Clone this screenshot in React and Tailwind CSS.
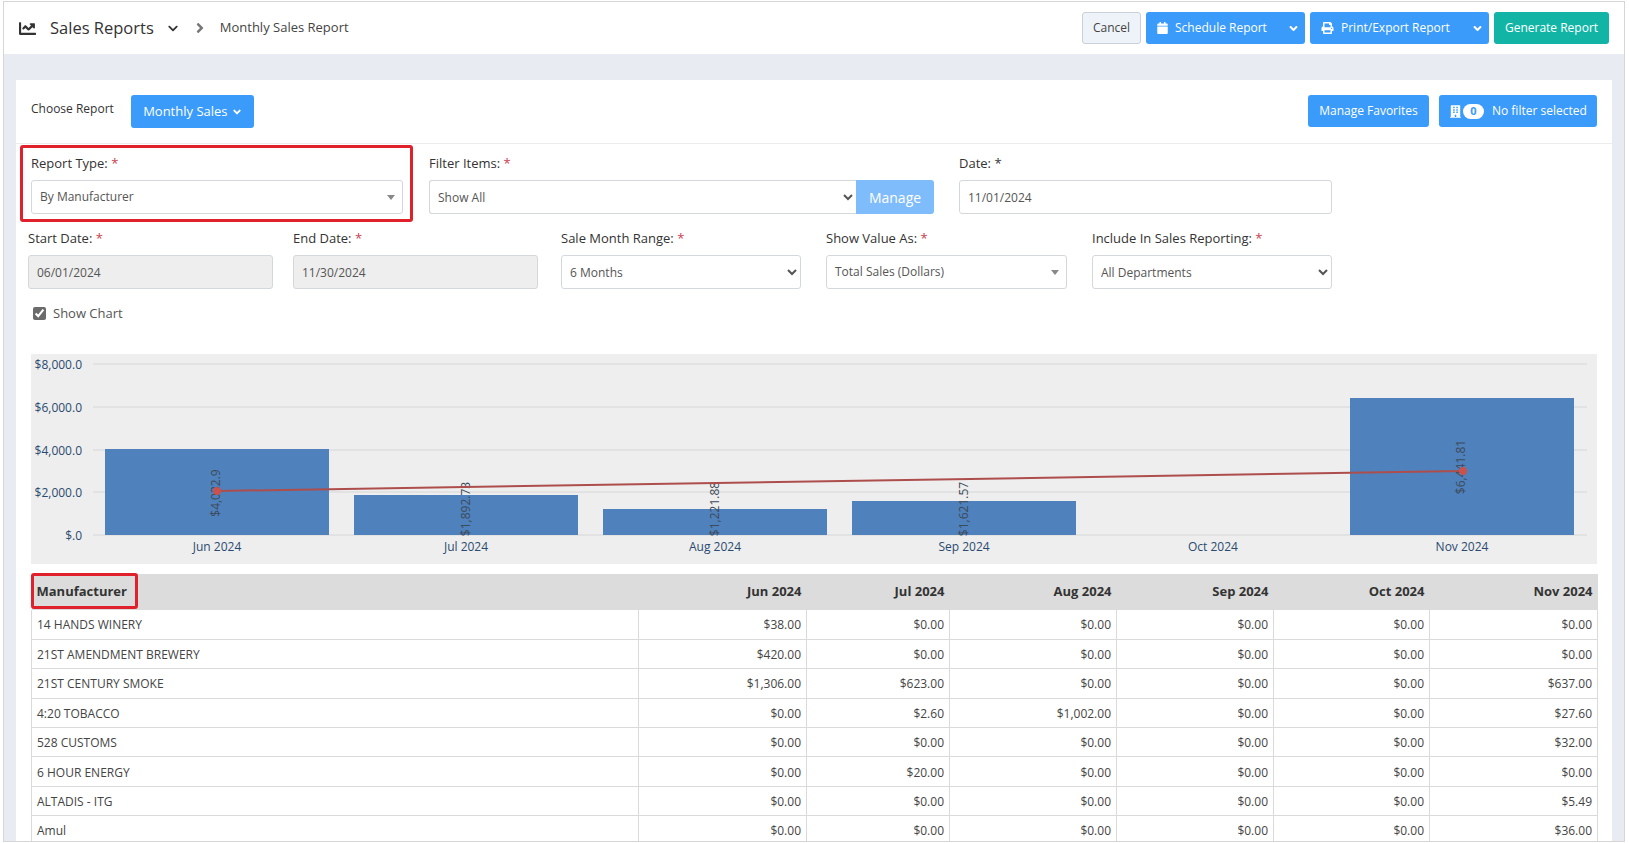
import React from 'react';
import { FaChartLine, FaChevronDown, FaAngleDown, FaAngleRight, FaCalendar, FaPrint, FaBuilding } from 'react-icons/fa';

const months = ['Jun 2024', 'Jul 2024', 'Aug 2024', 'Sep 2024', 'Oct 2024', 'Nov 2024'];

const rows = [
  ['14 HANDS WINERY', '$38.00', '$0.00', '$0.00', '$0.00', '$0.00', '$0.00'],
  ['21ST AMENDMENT BREWERY', '$420.00', '$0.00', '$0.00', '$0.00', '$0.00', '$0.00'],
  ['21ST CENTURY SMOKE', '$1,306.00', '$623.00', '$0.00', '$0.00', '$0.00', '$637.00'],
  ['4:20 TOBACCO', '$0.00', '$2.60', '$1,002.00', '$0.00', '$0.00', '$27.60'],
  ['528 CUSTOMS', '$0.00', '$0.00', '$0.00', '$0.00', '$0.00', '$32.00'],
  ['6 HOUR ENERGY', '$0.00', '$20.00', '$0.00', '$0.00', '$0.00', '$0.00'],
  ['ALTADIS - ITG', '$0.00', '$0.00', '$0.00', '$0.00', '$0.00', '$5.49'],
  ['Amul', '$0.00', '$0.00', '$0.00', '$0.00', '$0.00', '$36.00'],
];

// chart coordinates are relative to the grey plot box
const bars = [
  { x: 74, top: 95, label: '$4,032.9', lx: 184, ly: 139 },
  { x: 323, top: 141, label: '$1,892.73', lx: 434, ly: 155 },
  { x: 572, top: 155, label: '$1,221.88', lx: 683, ly: 155 },
  { x: 821, top: 147, label: '$1,621.57', lx: 932, ly: 155 },
  { x: 1319, top: 44, label: '$6,441.81', lx: 1429, ly: 113 },
];
const ticks = [
  { y: 10, label: '$8,000.0' },
  { y: 53, label: '$6,000.0' },
  { y: 96, label: '$4,000.0' },
  { y: 138, label: '$2,000.0' },
  { y: 181, label: '$.0' },
];

const Req = () => <span className="text-[#c8404e]">*</span>;

const Label = ({ className = 'h-[26px] leading-[18px]', children }) => (
  <label className={`block text-[13px] font-medium text-[#333] ${className}`}>{children}</label>
);

const inputClass = 'h-[34px] w-full rounded-[3px] border border-[#d4d8dd] px-2 text-[12px] text-[#555] outline-none';

const FakeSelect = ({ value }) => (
  <div className="flex h-[34px] w-full items-center justify-between rounded-[3px] border border-[#d4d8dd] bg-white pl-2 pr-[7px] text-[12px] text-[#555]">
    <span>{value}</span>
    <span className="h-0 w-0 border-x-[4px] border-t-[5px] border-x-transparent border-t-[#888]" />
  </div>
);

const NativeSelect = ({ value, className = '' }) => (
  <select
    defaultValue={value}
    className={`h-[34px] w-full rounded-[3px] border border-[#d4d8dd] bg-white pl-1 pr-2 text-[12px] text-[#555] outline-none ${className}`}
  >
    <option>{value}</option>
  </select>
);

const BlueBtn = ({ className = '', children }) => (
  <button type="button" className={`flex items-center rounded-[3px] bg-[#3a9bfa] text-[12px] text-white ${className}`}>
    {children}
  </button>
);

const Chart = () => (
  <div className="h-[210px] w-[1566px] bg-[#eeeeee]">
    <svg width="1566" height="210" viewBox="0 0 1566 210">
      {ticks.map((t) => (
        <g key={t.label}>
          <line x1="62" x2="1556" y1={t.y} y2={t.y} stroke="#d6d6d6" />
          <text x="51" y={t.y} textAnchor="end" dominantBaseline="central" fontSize="12" fill="#2b4a6f">{t.label}</text>
        </g>
      ))}
      {bars.map((b) => (
        <rect key={b.label} x={b.x} y={b.top} width="224" height={181 - b.top} fill="#4f81bd" />
      ))}
      {months.map((m, i) => (
        <text key={m} x={186 + i * 249} y="192" textAnchor="middle" dominantBaseline="central" fontSize="12" fill="#2b4a6f">{m}</text>
      ))}
      {bars.map((b) => (
        <text
          key={b.label}
          transform={`translate(${b.lx} ${b.ly}) rotate(-90)`}
          textAnchor="middle"
          dominantBaseline="central"
          fontSize="12"
          fill="#3d4a58"
        >
          {b.label}
        </text>
      ))}
      <line x1="186" y1="137" x2="1432" y2="117" stroke="#ad4e4c" strokeWidth="2" />
      <circle cx="186" cy="137" r="4" fill="#c9524f" />
      <circle cx="1432" cy="117" r="4" fill="#c9524f" />
    </svg>
  </div>
);

const ReportTable = () => (
  <table className="w-[1566px] table-fixed border-collapse text-[12px] text-[#444]">
    <colgroup>
      <col className="w-[607px]" />
      <col className="w-[168px]" />
      <col className="w-[143px]" />
      <col className="w-[167px]" />
      <col className="w-[157px]" />
      <col className="w-[156px]" />
      <col className="w-[168px]" />
    </colgroup>
    <thead>
      <tr className="h-[36px] bg-[#dcdcdc] text-[13px] font-bold text-[#333]">
        <th className="relative pl-[5px] text-left font-bold">
          Manufacturer
          <span className="absolute left-[-1px] top-[-1px] h-[36px] w-[107px] rounded-[3px] border-[3px] border-[#e0202a]" />
        </th>
        {months.map((m) => (
          <th key={m} className="pr-[5px] text-right font-bold">{m}</th>
        ))}
      </tr>
    </thead>
    <tbody>
      {rows.map((r) => (
        <tr key={r[0]} className="h-[29.4px] border-b border-[#dadada]">
          {r.map((c, i) => (
            <td
              key={i}
              className={i === 0 ? 'border-x border-[#dadada] pl-[5px] pt-[2px]' : 'border-r border-[#dadada] pr-[5px] pt-[2px] text-right'}
            >
              {c}
            </td>
          ))}
        </tr>
      ))}
    </tbody>
  </table>
);

export default function App() {
  return (
    <div className="h-screen overflow-hidden bg-white pl-[3px] pr-[4px] pt-[1px] pb-[1px] font-['Open_Sans',sans-serif]">
      <div className="flex h-full flex-col overflow-hidden border border-[#d6d6d6] bg-[#e9ebf3]">
        {/* Top bar */}
        <div className="flex h-[52px] shrink-0 items-center justify-between bg-white pl-[15px] pr-[15px]">
          <div className="flex items-center text-[#333]">
            <FaChartLine className="h-[17px] w-[17px]" />
            <span className="ml-[14px] text-[16.5px]">Sales Reports</span>
            <FaChevronDown className="ml-[13px] h-[11px] w-[12px]" />
            <FaAngleRight className="ml-[15px] h-[16px] w-[12px] text-[#777]" />
            <span className="ml-[14px] text-[13px] text-[#444]">Monthly Sales Report</span>
          </div>
          <div className="flex items-center gap-[5px]">
            <button type="button" className="h-[32px] w-[59px] rounded-[3px] border border-[#c9d0d8] bg-[#eef3f9] text-[12px] text-[#444]">
              Cancel
            </button>
            <BlueBtn className="h-[32px] w-[159px] pl-[11px]">
              <FaCalendar className="h-[12px] w-[11px]" />
              <span className="ml-[7px]">Schedule Report</span>
              <FaAngleDown className="ml-auto mr-[6px] h-[13px] w-[11px]" />
            </BlueBtn>
            <BlueBtn className="h-[32px] w-[179px] pl-[11px]">
              <FaPrint className="h-[12px] w-[13px]" />
              <span className="ml-[7px]">Print/Export Report</span>
              <FaAngleDown className="ml-auto mr-[6px] h-[13px] w-[11px]" />
            </BlueBtn>
            <button type="button" className="h-[32px] w-[115px] rounded-[3px] bg-[#12b5a5] text-[12px] text-white">
              Generate Report
            </button>
          </div>
        </div>

        <div className="flex min-h-0 flex-1 flex-col px-[12px] pt-[26px]">
          <div className="relative min-h-0 flex-1 overflow-hidden bg-white">
            {/* Choose report */}
            <div className="flex h-[64px] items-start justify-between border-b border-[#ececec] pl-[15px] pr-[15px] pt-[15px]">
              <div className="flex items-start">
                <span className="mt-[5px] text-[12px] text-[#333]">Choose Report</span>
                <BlueBtn className="ml-[17px] h-[33px] w-[123px] justify-center text-[13px]">
                  Monthly Sales
                  <FaAngleDown className="ml-[4px] h-[12px] w-[10px]" />
                </BlueBtn>
              </div>
              <div className="flex gap-[10px]">
                <BlueBtn className="h-[32px] w-[121px] justify-center">Manage Favorites</BlueBtn>
                <BlueBtn className="h-[32px] w-[158px] pl-[11px]">
                  <FaBuilding className="h-[13px] w-[11px]" />
                  <span className="ml-[2px] flex h-[15px] w-[21px] items-center justify-center rounded-full bg-white text-[11px] font-bold text-[#3a9bfa]">0</span>
                  <span className="ml-[8px]">No filter selected</span>
                </BlueBtn>
              </div>
            </div>

            {/* Form rows */}
            <div className="ml-[15px] mt-[11px] flex">
              <div className="w-[372px]">
                <Label className="h-[25px] leading-[16px]">Report Type: <Req /></Label>
                <FakeSelect value="By Manufacturer" />
              </div>
              <div className="ml-[26px] w-[505px]">
                <Label className="h-[25px] leading-[16px]">Filter Items: <Req /></Label>
                <div className="flex">
                  <NativeSelect value="Show All" className="rounded-r-none border-r-0" />
                  <button type="button" className="h-[34px] w-[78px] shrink-0 rounded-r-[3px] bg-[#7fbcfb] text-[14px] text-white">Manage</button>
                </div>
              </div>
              <div className="ml-[25px] w-[373px]">
                <Label className="h-[25px] leading-[16px]">Date: *</Label>
                <input readOnly value="11/01/2024" className={inputClass} />
              </div>
            </div>

            <div className="ml-[12px] mt-[15px] flex">
              <div className="w-[245px]">
                <Label>Start Date: <Req /></Label>
                <input readOnly value="06/01/2024" className={`${inputClass} bg-[#eeeeee]`} />
              </div>
              <div className="ml-[20px] w-[245px]">
                <Label>End Date: <Req /></Label>
                <input readOnly value="11/30/2024" className={`${inputClass} bg-[#eeeeee]`} />
              </div>
              <div className="ml-[23px] w-[240px]">
                <Label>Sale Month Range: <Req /></Label>
                <NativeSelect value="6 Months" />
              </div>
              <div className="ml-[25px] w-[241px]">
                <Label>Show Value As: <Req /></Label>
                <FakeSelect value="Total Sales (Dollars)" />
              </div>
              <div className="ml-[25px] w-[240px]">
                <Label>Include In Sales Reporting: <Req /></Label>
                <NativeSelect value="All Departments" />
              </div>
            </div>

            <label className="ml-[17px] mt-[16px] flex h-[16px] items-center text-[13px] leading-[16px] text-[#555]">
              <input type="checkbox" defaultChecked className="h-[13px] w-[13px] accent-[#6b6b6b]" />
              <span className="ml-[7px]">Show Chart</span>
            </label>

            <div className="ml-[15px] mt-[33px]">
              <Chart />
            </div>
            <div className="ml-[15px] mt-[10px]">
              <ReportTable />
            </div>

            {/* annotation */}
            <div className="absolute left-[4px] top-[65px] h-[77px] w-[393px] rounded-[3px] border-[3px] border-[#e0202a]" />
          </div>
        </div>
      </div>
    </div>
  );
}
